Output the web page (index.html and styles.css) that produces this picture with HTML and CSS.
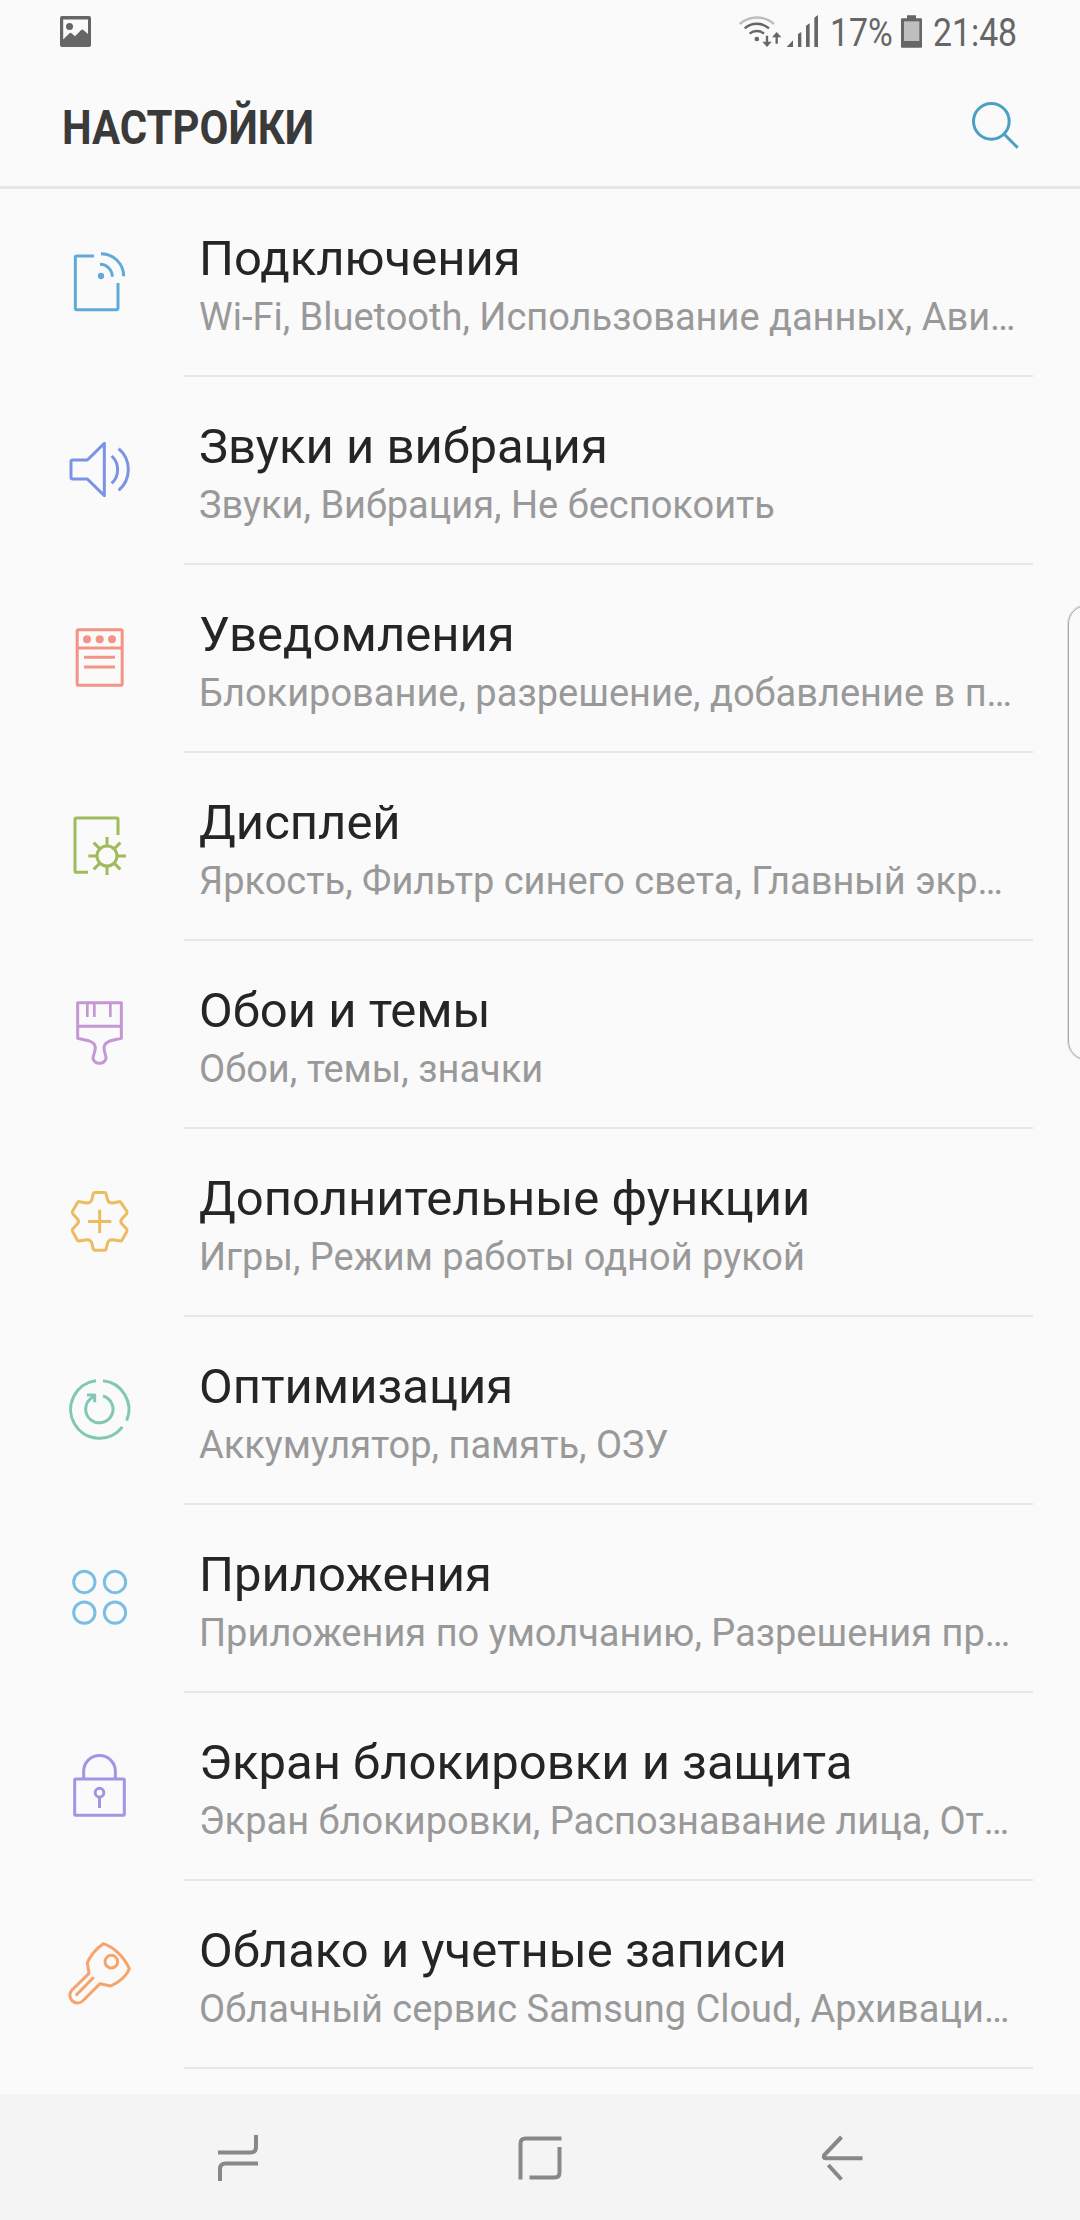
FILE: index.html
```html
<!DOCTYPE html>
<html lang="ru">
<head>
<meta charset="utf-8">
<title>Настройки</title>
<link rel="stylesheet" href="styles.css">
</head>
<body>
<div class="screen">
  <div class="status">
    <svg class="status-picture" viewBox="0 0 31 31"><path fill-rule="evenodd" d="M2 0H29Q31 0 31 2V29Q31 31 29 31H2Q0 31 0 29V2Q0 0 2 0ZM3.200 3.500V23.400L9.200 17.400Q10.500 16.200 11.800 17.400L15 20.300L20.900 14.200Q22.300 12.900 23.700 14.200L28 18V3.500Z"/><circle cx="9.500" cy="10.500" r="3.500"/></svg>
    <div class="status-right">
      <svg class="signal" viewBox="54 40 246 108">
        <g fill="none" stroke="#666" stroke-width="7"><path stroke="#bebebe" d="M59 73A78 78 0 0 1 162 73"/><path d="M74 86A55 55 0 0 1 147 86"/><path d="M89 102A33 33 0 0 1 132 102"/></g>
        <circle cx="110.500" cy="118" r="7"/>
        <path d="M137.500 108H144.500V126H155L141 142L127 126H137.500ZM166.500 132V113H156L170 97L184 113H173.500V132Z"/>
        <path d="M200 142L219 122V142ZM234 103L244 97V142H234ZM258 78L269 71V142H258ZM283 54L294 46V142H283Z"/>
      </svg>
      <span class="status-text percent"><span>17%</span></span>
      <svg class="battery" viewBox="543 45 63 99"><path d="M561 46H588V55H603Q606 55 606 58V140Q606 143 603 143H546Q543 143 543 140V58Q543 55 546 55H561Z"/><path fill="#bebebe" d="M552 64H598V123H552Z"/></svg>
      <span class="status-text clock"><span>21:48</span></span>
    </div>
  </div>
  <header class="header">
    <h1><span>НАСТРОЙКИ</span></h1>
    <svg class="search" viewBox="750 300 150 150"><circle cx="814" cy="364" r="53.500"/><path d="M852 402L893 443"/></svg>
  </header>
  <main class="list">
    <div class="row">
      <svg class="icon blue" viewBox="39 48 216 216"><path d="M132 78H80Q76 78 76 82V235Q76 239 80 239H200Q204 239 204 235V159M153 71A68 68 0 0 1 221 139M150 103A37 37 0 0 1 187 140"/><circle class="dot" cx="153" cy="138" r="9.500"/></svg>
      <div class="text"><div class="title">Подключения</div><div class="sub">Wi-Fi, Bluetooth, Использование данных, Ави…</div></div>
    </div>
    <div class="row">
      <svg class="icon indigo" viewBox="39 612 216 216"><path d="M68 690H112L163 640V797L112 747H68Q63 747 63 742V695Q63 690 68 690ZM185 678A56 56 0 0 1 185 760M206 656A82 82 0 0 1 206 781"/></svg>
      <div class="text"><div class="title">Звуки и вибрация</div><div class="sub">Звуки, Вибрация, Не беспокоить</div></div>
    </div>
    <div class="row">
      <svg class="icon coral" viewBox="39 66 216 216"><rect x="81.500" y="89" width="135" height="167" rx="4"/><path d="M82 144H216M102 172H195M102 201H195"/><circle class="dot" cx="111" cy="118" r="12"/><circle class="dot" cx="149" cy="118" r="12"/><circle class="dot" cx="186" cy="118" r="12"/></svg>
      <div class="text"><div class="title">Уведомления</div><div class="sub">Блокирование, разрешение, добавление в п…</div></div>
    </div>
    <div class="row">
      <svg class="icon green" viewBox="39 630 216 216"><path d="M204 705V658Q204 654 200 654H79Q75 654 75 658V813Q75 817 79 817H114M171 711V737M171 799V825M115 768H140M202 768H228M131 728L149 746M193 790L211 808M131 808L149 790M193 746L211 728"/><circle cx="171" cy="768" r="30"/></svg>
      <div class="text"><div class="title">Дисплей</div><div class="sub">Яркость, Фильтр синего света, Главный экр…</div></div>
    </div>
    <div class="row">
      <svg class="icon purple" viewBox="39 84 216 216"><path d="M83 98H214V205C190 211 164 212 162 232C162 248 168 254 168 265A20 19 0 0 1 129 265C129 254 136 248 136 232C134 212 108 211 83 205ZM83 169H214"/><path stroke-width="8" d="M112 98V141M133 98V141M181 98V141"/></svg>
      <div class="text"><div class="title">Обои и темы</div><div class="sub">Обои, темы, значки</div></div>
    </div>
    <div class="row">
      <svg class="icon amber" viewBox="39 648 216 216"><path d="M135 667.500H163Q167 667.500 168 671L173 690Q176 700 187 699L207 695Q211 694 213 698L230 723Q233 727 230 731L216 746Q209 754 216 762L230 777Q233 781 230 785L216 810Q214 814 210 813L188 809Q177 808 173 818L168 838Q167 841 163 841H135Q131 841 130 838L125 818Q121 808 110 809L88 813Q84 814 82 810L68 785Q65 781 68 777L82 762Q89 754 82 746L68 731Q65 727 68 723L82 698Q84 694 88 695L110 699Q121 700 125 690L130 671Q131 667.500 135 667.500ZM114 754.500H184M149 719V789"/></svg>
      <div class="text"><div class="title">Дополнительные функции</div><div class="sub">Игры, Режим работы одной рукой</div></div>
    </div>
    <div class="row">
      <svg class="icon teal" viewBox="39 72 216 216"><path d="M159 92.500A86.500 86.500 0 0 1 230 212M217 231A86.500 86.500 0 1 1 138 92.500M159 138A41 41 0 1 1 123 145L133 137M111 135H134V157"/></svg>
      <div class="text"><div class="title">Оптимизация</div><div class="sub">Аккумулятор, память, ОЗУ</div></div>
    </div>
    <div class="row">
      <svg class="icon sky" viewBox="39 636 216 216"><circle cx="103" cy="696" r="32"/><circle cx="195" cy="696" r="32"/><circle cx="103" cy="788" r="32"/><circle cx="195" cy="788" r="32"/></svg>
      <div class="text"><div class="title">Приложения</div><div class="sub">Приложения по умолчанию, Разрешения пр…</div></div>
    </div>
    <div class="row">
      <svg class="icon violet" viewBox="39 60 216 216"><rect x="74" y="147" width="149" height="109" rx="3"/><path d="M101 146V124A47.500 47.500 0 0 1 196 124V146M148.500 201V234"/><circle cx="148.500" cy="188" r="13"/></svg>
      <div class="text"><div class="title">Экран блокировки и защита</div><div class="sub">Экран блокировки, Распознавание лица, От…</div></div>
    </div>
    <div class="row">
      <svg class="icon orange" viewBox="39 624 216 216"><path d="M160 641C192 652 222 680 238 716C230 738 205 757 182 768L150 761L98 813A23 23 0 0 1 66 780L117 730L112 698C122 675 140 655 160 641Z"/><circle cx="184" cy="695" r="19"/><path stroke-linecap="round" d="M80 794L129 744"/></svg>
      <div class="text"><div class="title">Облако и учетные записи</div><div class="sub">Облачный сервис Samsung Cloud, Архиваци…</div></div>
    </div>
  </main>
  <nav class="nav">
    <svg viewBox="214 2134 48 48"><path d="M256 2135V2147Q256 2152.500 250.500 2152.500H218M258 2163.500H225.500Q220 2163.500 220 2169V2181"/></svg>
    <svg viewBox="516 2134 48 48"><path d="M520.500 2179.500V2143.500Q520.500 2138.500 525.500 2138.500H561.500M559.500 2147V2172.500Q559.500 2177.500 554.500 2177.500H529.500"/></svg>
    <svg viewBox="819 2134 48 48"><path d="M842.500 2137L825.300 2155Q823.500 2158 827 2158.300H863.500M829.300 2165L842.500 2179.500"/></svg>
  </nav>
  <div class="edge-handle"></div>
</div>
</body>
</html>
```
FILE: styles.css
```css
* { box-sizing: border-box; }
body { margin: 0; background: #fafafa; font-family: Roboto, "Liberation Sans", sans-serif; }
svg { display: block; flex: none; }
.screen { position: relative; width: 1080px; height: 2220px; overflow: hidden; display: flex; flex-direction: column; }

.status { height: 64px; padding: 0 61px 0 60px; display: flex; justify-content: space-between; fill: #666; color: #666; }
.status-picture { width: 31px; height: 31px; margin-top: 15.500px; }
.status-right { display: flex; }
.signal { width: 82px; height: 36px; margin-top: 13px; }
.status-text { font-size: 39.500px; line-height: 46px; margin-top: 10px; white-space: nowrap; }
.status-text span { display: inline-block; transform-origin: left; transform: scaleX(.855); }
.percent { width: 61px; margin-left: 10px; }
.battery { width: 21px; height: 33px; margin: 15px 0 0 10px; }
.clock { width: 86px; margin-left: 11px; }

.header { height: 125px; padding: 0 60px 0 62px; display: flex; justify-content: space-between; border-bottom: 3px solid #e6e6e6; }
.header h1 { margin: 35px 0 0; font-size: 49px; line-height: 58px; font-weight: 700; color: #3a3a3a; }
.header h1 span { display: inline-block; transform-origin: left; transform: scaleX(.855); }
.search { width: 50px; height: 50px; margin-top: 36px; fill: none; stroke: #4aa0c0; stroke-width: 9; }

.list { flex: 1; }
.row { height: 188px; display: flex; padding: 0 47px 0 63px; }
.icon { width: 72px; height: 72px; margin: 57px 49px 0 0; fill: none; stroke: currentColor; stroke-width: 9; stroke-linejoin: round; }
.dot { fill: currentColor; stroke: none; }
.text { flex: 1; min-width: 0; padding: 41px 0 0 15px; border-bottom: 2px solid #e6e6e6; }
.title { font-size: 49px; line-height: 58px; color: #252525; white-space: nowrap; }
.sub { font-size: 38px; line-height: 46px; margin-top: 6px; color: #999; white-space: nowrap; }

.blue { color: #5eabd8; }
.indigo { color: #7b93e4; }
.coral { color: #f49486; }
.green { color: #9fbc5c; }
.purple { color: #c398d3; }
.amber { color: #ecbc60; }
.teal { color: #80c7b5; }
.sky { color: #7bbee3; }
.violet { color: #a594e6; }
.orange { color: #f7a46c; }

.nav { height: 126px; padding: 0 87px; display: grid; grid-template-columns: repeat(3, 1fr); align-items: center; justify-items: center; background: #f4f4f4; }
.nav svg { width: 48px; height: 48px; fill: none; stroke: #888; stroke-width: 4; transform: translateY(1px); }

/* Pull-out panel handle that overlaps the right edge of the screen */
.edge-handle { position: absolute; left: 1068px; top: 605px; width: 40px; height: 455px; border: 1px solid #aaa; border-radius: 19px; box-shadow: 0 0 0 1px #dcdcdc; }
```
